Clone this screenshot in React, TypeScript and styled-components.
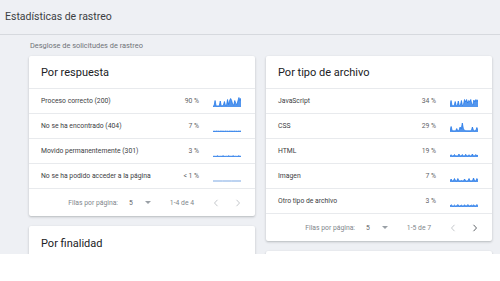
import React from "react";
import styled, { createGlobalStyle } from "styled-components";

const Global = createGlobalStyle`
  html, body { margin: 0; padding: 0; background: #ffffff; }
  body { font-family: Roboto, "Noto Sans", "Liberation Sans", sans-serif; }
  * { box-sizing: border-box; }
`;

const Page = styled.div`
  width: 500px;
  height: 254px;
  overflow: hidden;
  background: #eef0f4;
`;

const Header = styled.div`
  height: 35px;
  display: flex;
  align-items: center;
  padding: 0 0 1px 5px;
  border-bottom: 1px solid #d6d9de;
  font-size: 10.5px;
  color: #3c4043;
`;

const Subtitle = styled.div`
  height: 21px;
  display: flex;
  align-items: center;
  padding-left: 30px;
  padding-bottom: 1px;
  font-size: 7.4px;
  color: #6f7378;
`;

const Columns = styled.div`
  display: flex;
  gap: 11px;
  padding-left: 29px;
`;

const Column = styled.div`
  width: 226px;
  display: flex;
  flex-direction: column;
  gap: 10px;
`;

const Card = styled.div`
  background: #fff;
  border-radius: 2px;
  box-shadow: 0 1px 2px rgba(60, 64, 67, 0.22), 0 1px 3px rgba(60, 64, 67, 0.1);
`;

const CardTitle = styled.div<{ $h?: number }>`
  height: ${(p) => p.$h ?? 32}px;
  display: flex;
  align-items: center;
  padding-left: 12px;
  font-size: 11px;
  color: #202124;
`;

const Row = styled.div`
  height: 25px;
  display: flex;
  align-items: center;
  padding: 0 14px 0 12px;
  border-top: 1px solid #e8eaed;
  font-size: 6.8px;
  color: #3c4043;
`;

const Label = styled.div`
  flex: 1;
`;

const Pct = styled.div`
  width: 30px;
  text-align: right;
  margin-right: 14px;
  color: #5f6368;
`;

const Footer = styled.div`
  height: 28px;
  display: flex;
  align-items: center;
  justify-content: flex-end;
  padding-right: 10px;
  border-top: 1px solid #e8eaed;
  font-size: 6.8px;
  color: #80868b;
`;

const PerPage = styled.span`
  margin-right: 11px;
`;

const Select = styled.span`
  display: flex;
  align-items: center;
  gap: 12px;
  margin-right: 19px;
  color: #5f6368;
`;

const Caret = styled.span`
  width: 0;
  height: 0;
  border-left: 3px solid transparent;
  border-right: 3px solid transparent;
  border-top: 3px solid #9aa0a6;
`;

const Range = styled.span`
  margin-right: 15px;
`;

const Nav = styled.span<{ $on?: boolean }>`
  width: 14px;
  height: 14px;
  display: flex;
  align-items: center;
  justify-content: center;
  color: ${(p) => (p.$on ? "#5f6368" : "#c4c7cb")};
  & + & {
    margin-left: 8px;
  }
`;

function Chevron({ dir }: { dir: "l" | "r" }) {
  return (
    <svg width="6" height="8" viewBox="0 0 6 8">
      <polyline
        points={dir === "l" ? "4.5,0.8 1.5,4 4.5,7.2" : "1.5,0.8 4.5,4 1.5,7.2"}
        fill="none"
        stroke="currentColor"
        strokeWidth="1"
      />
    </svg>
  );
}

function Spark({ data, light }: { data: number[]; light?: boolean }) {
  const w = 28;
  const h = 11;
  const step = w / (data.length - 1);
  const pts = data.map((v, i) => `${(i * step).toFixed(2)},${(h - 0.5 - v * (h - 1)).toFixed(2)}`);
  const color = light ? "#7ba7e3" : "#1a73e8";
  return (
    <svg width={w} height={h} viewBox={`0 0 ${w} ${h}`}>
      {!light && (
        <path d={`M0,${h} L${pts.join(" L")} L${w},${h} Z`} fill={color} opacity={0.75} />
      )}
      <polyline points={pts.join(" ")} fill="none" stroke={color} strokeWidth={light ? 1 : 0.7} />
    </svg>
  );
}

const d200 = [0.05, 0.06, 0.6, 0.06, 0.06, 0.06, 0.06, 0.55, 0.06, 0.08, 0.12, 0.5, 0.1, 0.1, 0.7, 0.2, 0.6, 0.8, 0.6, 0.2, 0.15, 0.6, 0.3, 0.2, 0.55, 0.9, 0.6, 0.85];
const d404 = [0.02, 0.04, 0.02, 0.05, 0.03, 0.04, 0.02, 0.05, 0.03, 0.04, 0.02, 0.05, 0.03, 0.04, 0.02, 0.05, 0.03, 0.04, 0.02, 0.05, 0.03, 0.04, 0.02, 0.05, 0.03, 0.05];
const d301 = [0.02, 0.03, 0.02, 0.02, 0.08, 0.02, 0.02, 0.03, 0.02, 0.08, 0.02, 0.02, 0.03, 0.02, 0.08, 0.02, 0.03, 0.02, 0.08, 0.02, 0.03, 0.02, 0.02, 0.08, 0.02, 0.03];
const dFlat = [0.05, 0.05, 0.05, 0.05];
const dJs = [0.06, 0.6, 0.08, 0.08, 0.08, 0.5, 0.08, 0.08, 0.55, 0.08, 0.12, 0.6, 0.08, 0.2, 0.7, 0.45, 0.7, 0.35, 0.6, 0.5, 0.7, 0.25, 0.15, 0.65, 0.45, 0.7, 0.5, 0.7];
const dCss = [0.05, 0.5, 0.07, 0.07, 0.07, 0.05, 0.3, 0.05, 0.1, 0.45, 0.25, 0.85, 0.25, 0.12, 0.08, 0.08, 0.07, 0.07, 0.07, 0.08, 0.45, 0.1, 0.07, 0.1, 0.4, 0.12];
const dHtml = [0.05, 0.18, 0.05, 0.07, 0.2, 0.05, 0.07, 0.05, 0.25, 0.05, 0.07, 0.2, 0.05, 0.05, 0.22, 0.07, 0.05, 0.18, 0.05, 0.07, 0.25, 0.05, 0.07, 0.2, 0.05, 0.15];
const dImg = [0.05, 0.25, 0.05, 0.07, 0.3, 0.07, 0.05, 0.3, 0.07, 0.05, 0.1, 0.07, 0.05, 0.25, 0.07, 0.05, 0.07, 0.3, 0.05, 0.07, 0.05, 0.35, 0.07, 0.05, 0.3, 0.1];
const dOtro = [0.05, 0.18, 0.07, 0.05, 0.15, 0.05, 0.07, 0.2, 0.05, 0.05, 0.15, 0.07, 0.05, 0.18, 0.05, 0.07, 0.2, 0.05, 0.07, 0.15, 0.05, 0.18, 0.07, 0.05, 0.2, 0.07];

type RowData = { label: string; pct: string; data: number[]; light?: boolean };

const respuesta: RowData[] = [
  { label: "Proceso correcto (200)", pct: "90 %", data: d200 },
  { label: "No se ha encontrado (404)", pct: "7 %", data: d404 },
  { label: "Movido permanentemente (301)", pct: "3 %", data: d301 },
  { label: "No se ha podido acceder a la página", pct: "< 1 %", data: dFlat, light: true },
];

const tipo: RowData[] = [
  { label: "JavaScript", pct: "34 %", data: dJs },
  { label: "CSS", pct: "29 %", data: dCss },
  { label: "HTML", pct: "19 %", data: dHtml },
  { label: "Imagen", pct: "7 %", data: dImg },
  { label: "Otro tipo de archivo", pct: "3 %", data: dOtro },
];

function TableCard({ title, rows, range, nextOn }: { title: string; rows: RowData[]; range: string; nextOn?: boolean }) {
  return (
    <Card>
      <CardTitle>{title}</CardTitle>
      {rows.map((r) => (
        <Row key={r.label}>
          <Label>{r.label}</Label>
          <Pct>{r.pct}</Pct>
          <Spark data={r.data} light={r.light} />
        </Row>
      ))}
      <Footer>
        <PerPage>Filas por página:</PerPage>
        <Select>
          5 <Caret />
        </Select>
        <Range>{range}</Range>
        <Nav>
          <Chevron dir="l" />
        </Nav>
        <Nav $on={!!nextOn}>
          <Chevron dir="r" />
        </Nav>
      </Footer>
    </Card>
  );
}

export default function App() {
  return (
    <>
      <Global />
      <Page>
        <Header>Estadísticas de rastreo</Header>
        <Subtitle>Desglose de solicitudes de rastreo</Subtitle>
        <Columns>
          <Column>
            <TableCard title="Por respuesta" rows={respuesta} range="1-4 de 4" />
            <Card>
              <CardTitle $h={34}>Por finalidad</CardTitle>
            </Card>
          </Column>
          <Column>
            <TableCard title="Por tipo de archivo" rows={tipo} range="1-5 de 7" nextOn />
            <Card>
              <CardTitle $h={20} />
            </Card>
          </Column>
        </Columns>
      </Page>
    </>
  );
}
